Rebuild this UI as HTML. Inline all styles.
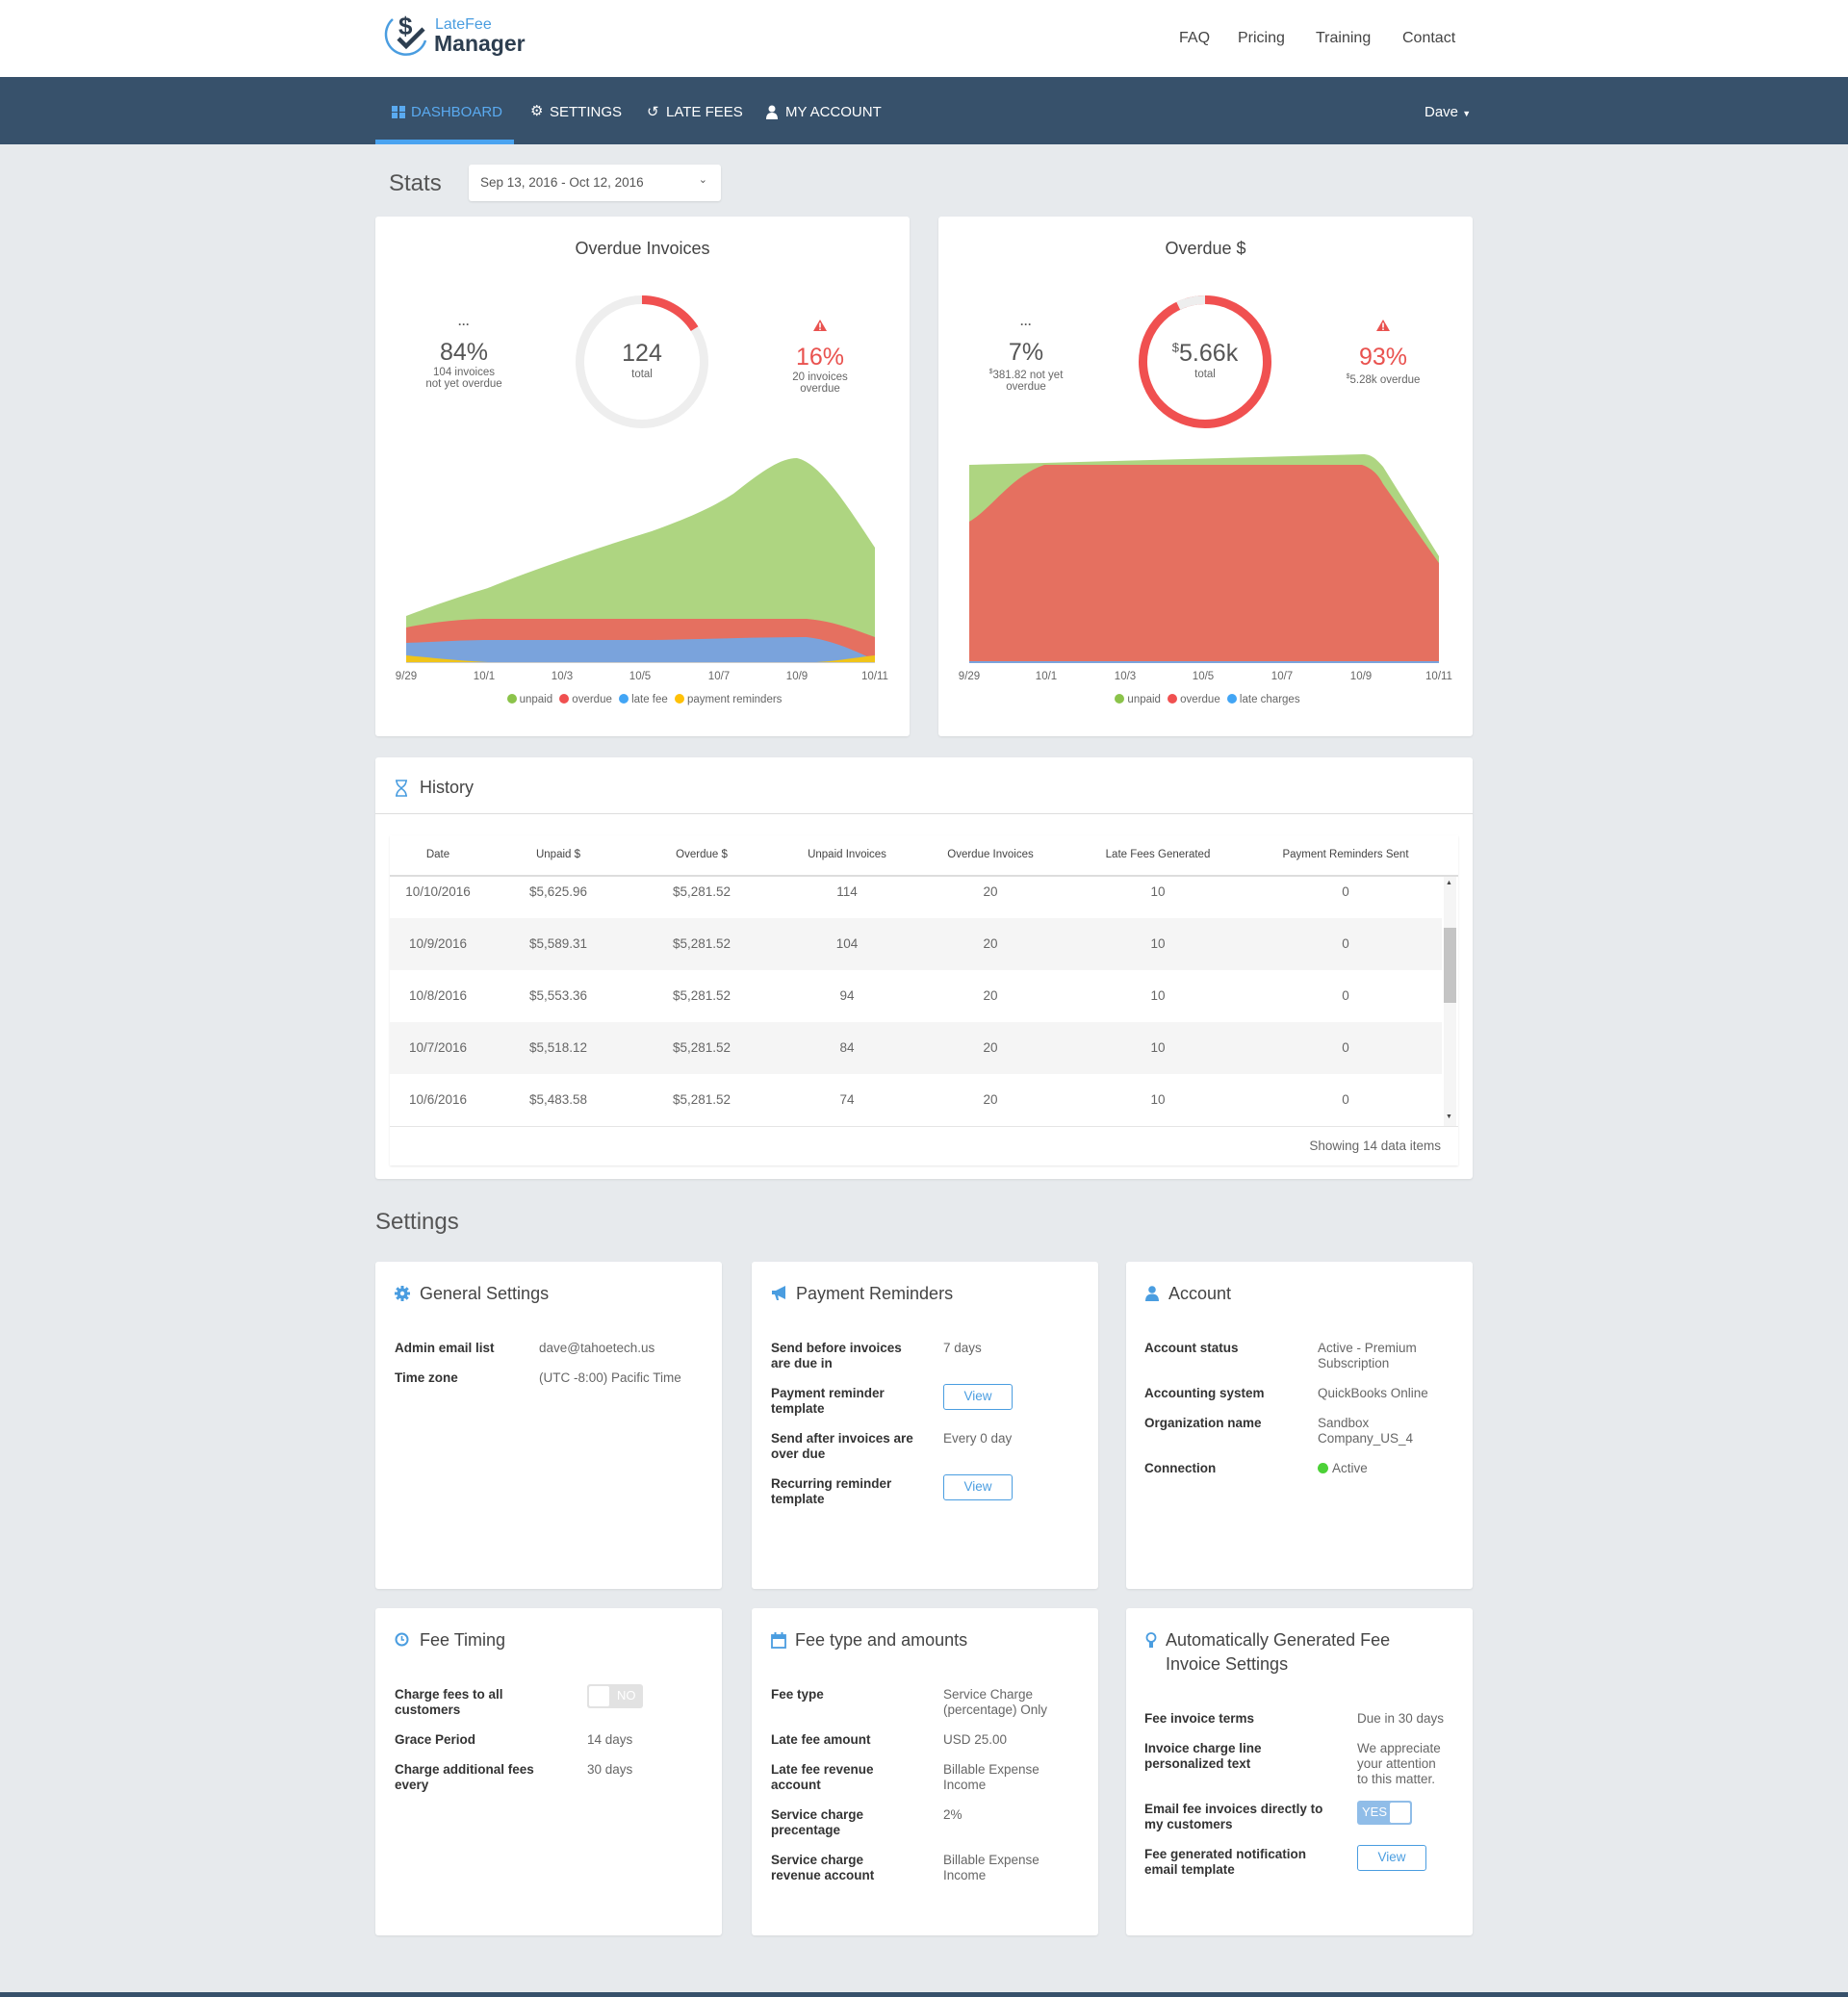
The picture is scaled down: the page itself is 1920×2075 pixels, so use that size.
<!DOCTYPE html>
<html><head><meta charset="utf-8">
<style>
*{box-sizing:border-box;margin:0;padding:0}
body{width:1920px;height:2075px;background:#e7eaed;font-family:"Liberation Sans",Arial,sans-serif;color:#555;position:relative;overflow:hidden}
.a{position:absolute}
.card{position:absolute;background:#fff;border-radius:3px;box-shadow:0 1px 2px rgba(0,0,0,.08)}
.ct{position:absolute;left:0;right:0;text-align:center;font-size:18px;color:#444}
.stat{position:absolute;width:160px;text-align:center}
.stat .p{font-size:25px;color:#555;line-height:28px;margin-top:10px}
.stat .s{font-size:11.5px;color:#666;line-height:12px;margin-top:1px}
.xl{position:absolute;font-size:11.5px;color:#666;transform:translateX(-50%)}
.leg{position:absolute;left:0;right:0;text-align:center;font-size:11.5px;color:#666}
.dot{display:inline-block;width:10px;height:10px;border-radius:50%;vertical-align:-1px;margin:0 3px 0 4px}
.th,.td{position:absolute;transform:translateX(-50%);white-space:nowrap}
.th{font-size:11.5px;color:#444}
.td{font-size:13.5px;color:#666}
.sc{position:absolute;background:#fff;border-radius:3px;width:360px;height:340px;box-shadow:0 1px 2px rgba(0,0,0,.08)}
.sc h3{position:absolute;left:46px;top:21px;font-weight:normal;font-size:18px;color:#444;line-height:25px}
.sc .ic{position:absolute;left:20px;top:25px}
.rows{position:absolute;left:20px;top:82px;right:10px}
.r{display:flex;font-size:13.5px;line-height:16px;margin-bottom:15px}
.r .l{font-weight:bold;color:#333}
.r .v{color:#666}
.btn{display:inline-block;width:72px;height:27px;border:1.5px solid #4a9de0;border-radius:3px;color:#4a9de0;text-align:center;line-height:24px;font-size:13.5px;margin-top:-2px}
</style></head><body>

<!-- header -->
<div class="a" style="left:0;top:0;width:1920px;height:80px;background:#fff"></div>
<svg class="a" style="left:398px;top:6px" width="50" height="56" viewBox="0 0 50 56">
<path d="M10 14 A21 21 0 1 0 44 36" fill="none" stroke="#4a9de0" stroke-width="2.5"/>
<text x="16" y="30" font-family="Liberation Sans" font-weight="bold" font-size="26" fill="#2d3e50">$</text>
<path d="M16 34 L24 42 L42 24" fill="none" stroke="#2d3e50" stroke-width="4.5"/>
</svg>
<div class="a" style="left:452px;top:17px;font-size:16px;color:#4a9de0;line-height:18px">LateFee</div>
<div class="a" style="left:451px;top:32px;font-size:23px;font-weight:bold;color:#2d3e50;line-height:26px">Manager</div>
<div class="a" style="left:1225px;top:31px;font-size:16px;color:#444">FAQ</div>
<div class="a" style="left:1286px;top:31px;font-size:16px;color:#444">Pricing</div>
<div class="a" style="left:1367px;top:31px;font-size:16px;color:#444">Training</div>
<div class="a" style="left:1457px;top:31px;font-size:16px;color:#444">Contact</div>

<!-- nav -->
<div class="a" style="left:0;top:80px;width:1920px;height:70px;background:#37516b"></div>
<div class="a" style="left:390px;top:145px;width:144px;height:5px;background:#4aa3f0"></div>
<div class="a" style="left:407px;top:110px;width:14px;height:13px;background:
linear-gradient(#5aaaf0,#5aaaf0) 0 0/6px 6px no-repeat,linear-gradient(#5aaaf0,#5aaaf0) 8px 0/6px 6px no-repeat,linear-gradient(#5aaaf0,#5aaaf0) 0 7px/6px 6px no-repeat,linear-gradient(#5aaaf0,#5aaaf0) 8px 7px/6px 6px no-repeat"></div>
<div class="a" style="left:427px;top:108px;font-size:15px;color:#5aaaf0">DASHBOARD</div>
<div class="a" style="left:551px;top:106px;font-size:15px;color:#fff">⚙</div>
<div class="a" style="left:571px;top:108px;font-size:15px;color:#fff">SETTINGS</div>
<div class="a" style="left:672px;top:107px;font-size:15px;color:#fff">↺</div>
<div class="a" style="left:692px;top:108px;font-size:15px;color:#fff">LATE FEES</div>
<svg class="a" style="left:796px;top:109px" width="12" height="15"><circle cx="6" cy="4" r="3.5" fill="#fff"/><path d="M0 15 Q0 8 6 8 Q12 8 12 15Z" fill="#fff"/></svg>
<div class="a" style="left:816px;top:108px;font-size:15px;color:#fff">MY ACCOUNT</div>
<div class="a" style="left:1480px;top:108px;font-size:15px;color:#fff">Dave <span style="font-size:9px">▼</span></div>

<!-- stats header -->
<div class="a" style="left:404px;top:177px;font-size:24px;color:#555">Stats</div>
<div class="a" style="left:487px;top:171px;width:262px;height:38px;background:#fff;border-radius:3px;box-shadow:0 1px 2px rgba(0,0,0,.1);font-size:13.5px;color:#555;padding:11px 0 0 12px">Sep 13, 2016 - Oct 12, 2016<span style="position:absolute;right:14px;top:9px;font-size:11px">⌄</span></div>

<!-- card 1 -->
<div class="card" style="left:390px;top:225px;width:555px;height:540px">
 <div class="ct" style="top:23px">Overdue Invoices</div>
 <div class="stat" style="left:12px;top:107px"><div style="font-size:12px;font-weight:bold;line-height:10px">···</div><div class="p">84%</div><div class="s">104 invoices<br>not yet overdue</div></div>
 <div class="stat" style="left:382px;top:106px"><svg width="14" height="12" viewBox="0 0 14 12"><path d="M7 0 L14 12 L0 12Z" fill="#e9524f"/><rect x="6.2" y="3.5" width="1.6" height="5" fill="#fff"/><rect x="6.2" y="9.5" width="1.6" height="1.5" fill="#fff"/></svg><div class="p" style="color:#e9524f;margin-top:8px">16%</div><div class="s">20 invoices<br>overdue</div></div>
 <svg class="a" style="left:207px;top:81px" width="140" height="140" viewBox="0 0 140 140">
  <circle cx="70" cy="70" r="64.5" fill="none" stroke="#eeeeee" stroke-width="9"/>
  <path d="M70 5.5 A64.5 64.5 0 0 1 124.6 35.6" fill="none" stroke="#f05050" stroke-width="9"/>
 </svg>
 <div class="a" style="left:207px;top:128px;width:140px;text-align:center;font-size:25px;color:#555">124</div>
 <div class="a" style="left:207px;top:158px;width:140px;text-align:center;font-size:11.5px;color:#666">total</div>
 <svg class="a" style="left:0;top:0" width="555" height="540">
  <path d="M32 415 C61 404 93 393 117 386 C166 366 229 345 287 327 C323 314 349 303 372 288 C400 266 420 251 438 251 C462 256 490 300 519 344 L519 463 L32 463Z" fill="#aed581"/>
  <path d="M32 427 C61 421 93 418 117 418 L448 418 C475 420 500 430 519 437 L519 463 L32 463Z" fill="#e57060"/>
  <path d="M32 443 C61 442 93 440 117 440 L287 440 C345 439 398 437 448 437 C475 440 500 452 519 461 L519 463 L32 463Z" fill="#7aa3dc"/>
  <path d="M32 456 C52 458 93 462 117 463 L32 463Z M458 463 C480 462 500 458 519 456 L519 463Z" fill="#f0c419"/>
  <line x1="32" y1="463.5" x2="519" y2="463.5" stroke="#ccc"/>
 </svg>
 <div class="xl" style="left:32px;top:472px">9/29</div><div class="xl" style="left:113px;top:472px">10/1</div><div class="xl" style="left:194px;top:472px">10/3</div><div class="xl" style="left:275px;top:472px">10/5</div><div class="xl" style="left:357px;top:472px">10/7</div><div class="xl" style="left:438px;top:472px">10/9</div><div class="xl" style="left:519px;top:472px">10/11</div>
 <div class="leg" style="top:496px"><span class="dot" style="background:#8bc34a"></span>unpaid <span class="dot" style="background:#f05050"></span>overdue <span class="dot" style="background:#42a5f5"></span>late fee <span class="dot" style="background:#ffc107"></span>payment reminders</div>
</div>

<!-- card 2 -->
<div class="card" style="left:975px;top:225px;width:555px;height:540px">
 <div class="ct" style="top:23px">Overdue $</div>
 <div class="stat" style="left:11px;top:107px"><div style="font-size:12px;font-weight:bold;line-height:10px">···</div><div class="p">7%</div><div class="s"><sup style="font-size:7px">$</sup>381.82 not yet<br>overdue</div></div>
 <div class="stat" style="left:382px;top:106px"><svg width="14" height="12" viewBox="0 0 14 12"><path d="M7 0 L14 12 L0 12Z" fill="#e9524f"/><rect x="6.2" y="3.5" width="1.6" height="5" fill="#fff"/><rect x="6.2" y="9.5" width="1.6" height="1.5" fill="#fff"/></svg><div class="p" style="color:#e9524f;margin-top:8px">93%</div><div class="s"><sup style="font-size:7px">$</sup>5.28k overdue</div></div>
 <svg class="a" style="left:207px;top:81px" width="140" height="140" viewBox="0 0 140 140">
  <circle cx="70" cy="70" r="64.5" fill="none" stroke="#f05050" stroke-width="9"/>
  <path d="M42.2 11.8 A64.5 64.5 0 0 1 70 5.5" fill="none" stroke="#eeeeee" stroke-width="9"/>
 </svg>
 <div class="a" style="left:207px;top:128px;width:140px;text-align:center;font-size:25px;color:#555"><sup style="font-size:13px">$</sup>5.66k</div>
 <div class="a" style="left:207px;top:158px;width:140px;text-align:center;font-size:11.5px;color:#666">total</div>
 <svg class="a" style="left:0;top:0" width="555" height="540">
  <path d="M32 258 L110 256 L441 247 C450 247 455 252 462 260 L520 353 L520 463 L32 463Z" fill="#aed581"/>
  <path d="M32 317 C55 304 75 270 110 258 L440 258 C452 262 458 270 462 278 L520 360 L520 463 L32 463Z" fill="#e57060"/>
  <line x1="32" y1="463" x2="520" y2="463" stroke="#7aa3dc" stroke-width="2"/>
 </svg>
 <div class="xl" style="left:32px;top:472px">9/29</div><div class="xl" style="left:112px;top:472px">10/1</div><div class="xl" style="left:194px;top:472px">10/3</div><div class="xl" style="left:275px;top:472px">10/5</div><div class="xl" style="left:357px;top:472px">10/7</div><div class="xl" style="left:439px;top:472px">10/9</div><div class="xl" style="left:520px;top:472px">10/11</div>
 <div class="leg" style="top:496px"><span class="dot" style="background:#8bc34a"></span>unpaid <span class="dot" style="background:#f05050"></span>overdue <span class="dot" style="background:#42a5f5"></span>late charges</div>
</div>

<!-- history -->
<div class="card" style="left:390px;top:787px;width:1140px;height:438px"></div>
<svg class="a" style="left:410px;top:810px" width="14" height="18"><path d="M1 1 H13 M1 17 H13 M2 1 C2 7 7 8 7 9 C7 10 2 11 2 17 M12 1 C12 7 7 8 7 9 C7 10 12 11 12 17" fill="none" stroke="#4a9de0" stroke-width="1.6"/></svg>
<div class="a" style="left:436px;top:808px;font-size:18px;color:#444">History</div>
<div class="a" style="left:390px;top:845px;width:1140px;height:1px;background:#ddd"></div>
<div class="a" style="left:405px;top:868px;width:1110px;height:343px;background:#fff;box-shadow:0 1px 2px rgba(0,0,0,.1)"></div>
<div class="a" style="left:405px;top:909px;width:1110px;height:2px;background:#ddd"></div>
<div class="a" style="left:405px;top:954px;width:1093px;height:54px;background:#f5f5f5"></div>
<div class="a" style="left:405px;top:1062px;width:1093px;height:54px;background:#f5f5f5"></div>
<div class="a" style="left:405px;top:1170px;width:1110px;height:1px;background:#e5e5e5"></div>
<div class="a" style="left:1500px;top:911px;width:13px;height:259px;background:#f5f5f5"></div>
<div class="a" style="left:1500px;top:964px;width:13px;height:78px;background:#c4c4c4"></div>
<div class="a" style="left:1502px;top:914px;font-size:7px;color:#444">▲</div>
<div class="a" style="left:1502px;top:1157px;font-size:7px;color:#444">▼</div>
<div class="th" style="left:455px;top:882px">Date</div><div class="th" style="left:580px;top:882px">Unpaid $</div><div class="th" style="left:729px;top:882px">Overdue $</div><div class="th" style="left:880px;top:882px">Unpaid Invoices</div><div class="th" style="left:1029px;top:882px">Overdue Invoices</div><div class="th" style="left:1203px;top:882px">Late Fees Generated</div><div class="th" style="left:1398px;top:882px">Payment Reminders Sent</div>

<div class="td" style="left:455px;top:919px">10/10/2016</div><div class="td" style="left:580px;top:919px">$5,625.96</div><div class="td" style="left:729px;top:919px">$5,281.52</div><div class="td" style="left:880px;top:919px">114</div><div class="td" style="left:1029px;top:919px">20</div><div class="td" style="left:1203px;top:919px">10</div><div class="td" style="left:1398px;top:919px">0</div>
<div class="td" style="left:455px;top:973px">10/9/2016</div><div class="td" style="left:580px;top:973px">$5,589.31</div><div class="td" style="left:729px;top:973px">$5,281.52</div><div class="td" style="left:880px;top:973px">104</div><div class="td" style="left:1029px;top:973px">20</div><div class="td" style="left:1203px;top:973px">10</div><div class="td" style="left:1398px;top:973px">0</div>
<div class="td" style="left:455px;top:1027px">10/8/2016</div><div class="td" style="left:580px;top:1027px">$5,553.36</div><div class="td" style="left:729px;top:1027px">$5,281.52</div><div class="td" style="left:880px;top:1027px">94</div><div class="td" style="left:1029px;top:1027px">20</div><div class="td" style="left:1203px;top:1027px">10</div><div class="td" style="left:1398px;top:1027px">0</div>
<div class="td" style="left:455px;top:1081px">10/7/2016</div><div class="td" style="left:580px;top:1081px">$5,518.12</div><div class="td" style="left:729px;top:1081px">$5,281.52</div><div class="td" style="left:880px;top:1081px">84</div><div class="td" style="left:1029px;top:1081px">20</div><div class="td" style="left:1203px;top:1081px">10</div><div class="td" style="left:1398px;top:1081px">0</div>
<div class="td" style="left:455px;top:1135px">10/6/2016</div><div class="td" style="left:580px;top:1135px">$5,483.58</div><div class="td" style="left:729px;top:1135px">$5,281.52</div><div class="td" style="left:880px;top:1135px">74</div><div class="td" style="left:1029px;top:1135px">20</div><div class="td" style="left:1203px;top:1135px">10</div><div class="td" style="left:1398px;top:1135px">0</div>
<div class="a" style="right:423px;top:1183px;font-size:13.5px;color:#666">Showing 14 data items</div>

<!-- settings -->
<div class="a" style="left:390px;top:1256px;font-size:24px;color:#555">Settings</div>

<div class="sc" style="left:390px;top:1311px">
 <svg class="ic" width="16" height="16" viewBox="0 0 16 16"><circle cx="8" cy="8" r="5.5" fill="#4a9de0"/><g stroke="#4a9de0" stroke-width="3"><line x1="8" y1="0" x2="8" y2="16"/><line x1="0" y1="8" x2="16" y2="8"/><line x1="2.3" y1="2.3" x2="13.7" y2="13.7"/><line x1="13.7" y1="2.3" x2="2.3" y2="13.7"/></g><circle cx="8" cy="8" r="2.2" fill="#fff"/></svg>
 <h3>General Settings</h3>
 <div class="rows">
  <div class="r"><div class="l" style="width:150px">Admin email list</div><div class="v">dave@tahoetech.us</div></div>
  <div class="r"><div class="l" style="width:150px">Time zone</div><div class="v">(UTC -8:00) Pacific Time</div></div>
 </div>
</div>

<div class="sc" style="left:781px;top:1311px">
 <svg class="ic" width="18" height="16" viewBox="0 0 18 16"><path d="M1 5 H5 L15 0 V14 L5 9 H1Z" fill="#4a9de0"/><path d="M4 9 L6 15 H8 L7 9Z" fill="#4a9de0"/></svg>
 <h3>Payment Reminders</h3>
 <div class="rows">
  <div class="r"><div class="l" style="width:179px">Send before invoices<br>are due in</div><div class="v">7 days</div></div>
  <div class="r"><div class="l" style="width:179px">Payment reminder<br>template</div><div class="v"><span class="btn">View</span></div></div>
  <div class="r"><div class="l" style="width:179px">Send after invoices are<br>over due</div><div class="v">Every 0 day</div></div>
  <div class="r"><div class="l" style="width:179px">Recurring reminder<br>template</div><div class="v"><span class="btn">View</span></div></div>
 </div>
</div>

<div class="sc" style="left:1170px;top:1311px">
 <svg class="ic" width="14" height="16"><circle cx="7" cy="4" r="3.8" fill="#4a9de0"/><path d="M0 16 Q0 8.5 7 8.5 Q14 8.5 14 16Z" fill="#4a9de0"/></svg>
 <h3 style="left:44px">Account</h3>
 <div class="rows" style="left:19px">
  <div class="r"><div class="l" style="width:180px">Account status</div><div class="v">Active - Premium<br>Subscription</div></div>
  <div class="r"><div class="l" style="width:180px">Accounting system</div><div class="v">QuickBooks Online</div></div>
  <div class="r"><div class="l" style="width:180px">Organization name</div><div class="v">Sandbox<br>Company_US_4</div></div>
  <div class="r"><div class="l" style="width:180px">Connection</div><div class="v"><span style="display:inline-block;width:11px;height:11px;border-radius:50%;background:#4cd137;vertical-align:-1px;margin-right:4px"></span>Active</div></div>
 </div>
</div>

<div class="sc" style="left:390px;top:1671px">
 <svg class="ic" width="15" height="15"><circle cx="7.5" cy="7.5" r="6" fill="none" stroke="#4a9de0" stroke-width="2"/><path d="M7.5 4 V8 H10" fill="none" stroke="#4a9de0" stroke-width="1.6"/></svg>
 <h3>Fee Timing</h3>
 <div class="rows">
  <div class="r"><div class="l" style="width:200px">Charge fees to all<br>customers</div><div class="v"><span style="display:inline-block;width:58px;height:25px;background:#e2e2e2;border-radius:3px;position:relative;margin-top:-3px"><span style="position:absolute;left:2px;top:2px;width:21px;height:21px;background:#fff;border-radius:2px"></span><span style="position:absolute;left:31px;top:4px;color:#fff;font-size:13px">NO</span></span></div></div>
  <div class="r"><div class="l" style="width:200px">Grace Period</div><div class="v">14 days</div></div>
  <div class="r"><div class="l" style="width:200px">Charge additional fees<br>every</div><div class="v">30 days</div></div>
 </div>
</div>

<div class="sc" style="left:781px;top:1671px">
 <svg class="ic" width="16" height="17"><rect x="1" y="3" width="14" height="13" fill="none" stroke="#4a9de0" stroke-width="1.8"/><rect x="1" y="3" width="14" height="4" fill="#4a9de0"/><rect x="3.5" y="0" width="2" height="4" fill="#4a9de0"/><rect x="10.5" y="0" width="2" height="4" fill="#4a9de0"/></svg>
 <h3 style="left:45px">Fee type and amounts</h3>
 <div class="rows">
  <div class="r"><div class="l" style="width:179px">Fee type</div><div class="v">Service Charge<br>(percentage) Only</div></div>
  <div class="r"><div class="l" style="width:179px">Late fee amount</div><div class="v">USD 25.00</div></div>
  <div class="r"><div class="l" style="width:179px">Late fee revenue<br>account</div><div class="v">Billable Expense<br>Income</div></div>
  <div class="r"><div class="l" style="width:179px">Service charge<br>precentage</div><div class="v">2%</div></div>
  <div class="r"><div class="l" style="width:179px">Service charge<br>revenue account</div><div class="v">Billable Expense<br>Income</div></div>
 </div>
</div>

<div class="sc" style="left:1170px;top:1671px">
 <svg class="ic" width="12" height="17"><circle cx="6" cy="5.5" r="4.5" fill="none" stroke="#4a9de0" stroke-width="1.8"/><rect x="4" y="10" width="4" height="6" fill="#4a9de0"/></svg>
 <h3 style="left:41px">Automatically Generated Fee<br>Invoice Settings</h3>
 <div class="rows" style="top:107px;left:19px">
  <div class="r"><div class="l" style="width:221px">Fee invoice terms</div><div class="v">Due in 30 days</div></div>
  <div class="r"><div class="l" style="width:221px">Invoice charge line<br>personalized text</div><div class="v">We appreciate<br>your attention<br>to this matter.</div></div>
  <div class="r"><div class="l" style="width:221px">Email fee invoices directly to<br>my customers</div><div class="v"><span style="display:inline-block;width:57px;height:25px;background:#90bde8;border-radius:3px;position:relative;margin-top:-1px"><span style="position:absolute;left:5px;top:4px;color:#fff;font-size:13px">YES</span><span style="position:absolute;right:2px;top:2px;width:21px;height:21px;background:#fff;border-radius:2px"></span></span></div></div>
  <div class="r"><div class="l" style="width:221px">Fee generated notification<br>email template</div><div class="v"><span class="btn">View</span></div></div>
 </div>
</div>

<div class="a" style="left:0;top:2070px;width:1920px;height:5px;background:#37516b"></div>
</body></html>
